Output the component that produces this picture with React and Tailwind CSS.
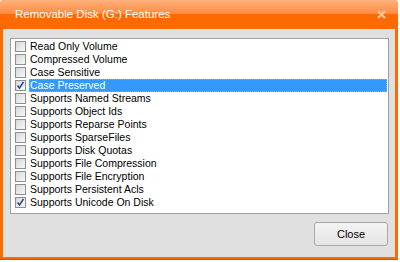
import React from 'react';

const features = [
  { label: 'Read Only Volume', checked: false },
  { label: 'Compressed Volume', checked: false },
  { label: 'Case Sensitive', checked: false },
  { label: 'Case Preserved', checked: true, selected: true },
  { label: 'Supports Named Streams', checked: false },
  { label: 'Supports Object Ids', checked: false },
  { label: 'Supports Reparse Points', checked: false },
  { label: 'Supports SparseFiles', checked: false },
  { label: 'Supports Disk Quotas', checked: false },
  { label: 'Supports File Compression', checked: false },
  { label: 'Supports File Encryption', checked: false },
  { label: 'Supports Persistent Acls', checked: false },
  { label: 'Supports Unicode On Disk', checked: true },
];

function CheckBox({ checked }) {
  return (
    <div className="w-[11px] h-[11px] shrink-0 border border-[#8e8f8f] bg-gradient-to-br from-[#d8d8d8] to-[#f7f7f7] flex items-center justify-center">
      {checked && (
        <svg width="9" height="9" viewBox="0 0 9 9">
          <path d="M1.5 4.5 L3.5 7 L7.5 1" fill="none" stroke="#2a3f8f" strokeWidth="1.4" />
        </svg>
      )}
    </div>
  );
}

export default function App() {
  return (
    <div className="w-[400px] h-[262px] bg-white" style={{ fontFamily: '"Liberation Sans", Arial, sans-serif' }}>
      <div className="w-[398px] h-[260px] flex flex-col bg-[#ff6a00] rounded-t-[4px] border-b border-[#d85400]">
        {/* title bar */}
        <div className="h-[29px] shrink-0 flex items-center justify-between pl-[15px] pr-[12px] rounded-t-[4px] bg-[linear-gradient(to_bottom,#ffb27f_0px,#ff8a3f_14px,#ff6a00_14px,#ff6a00_29px)]">
          <span className="text-[11.5px] text-white">Removable Disk (G:) Features</span>
          <svg width="9" height="9" viewBox="0 0 9 9">
            <path d="M1 1 L8 8 M8 1 L1 8" stroke="#ffc9a3" strokeWidth="2" />
          </svg>
        </div>

        {/* client area */}
        <div className="flex-1 mx-[3px] mb-[2px] bg-[#e0e0e0] flex flex-col px-[7px] pr-[6px] pt-[9px]">
          <div className="h-[176px] bg-white border border-[#a0a0a0] pt-[1px] pl-[4px] pr-[1px]">
            {features.map((f) => (
              <div key={f.label} className="h-[13px] flex items-center gap-[3px]">
                <CheckBox checked={f.checked} />
                <div
                  className={
                    f.selected
                      ? 'flex-1 h-[13px] flex items-center pl-[1px] bg-[#3399ff] text-white outline-1 outline-dotted outline-[#ff9900] -outline-offset-1 text-[10.5px]'
                      : 'flex-1 h-[13px] flex items-center pl-[1px] text-black text-[10.5px]'
                  }
                >
                  {f.label}
                </div>
              </div>
            ))}
          </div>
          <div className="flex justify-end pt-[8px] pr-[1px]">
            <button className="w-[74px] h-[24px] rounded-[3px] border border-[#a8a8a8] bg-gradient-to-b from-[#f4f4f4] to-[#e4e4e4] text-[11px] text-black">
              Close
            </button>
          </div>
        </div>
      </div>
    </div>
  );
}
